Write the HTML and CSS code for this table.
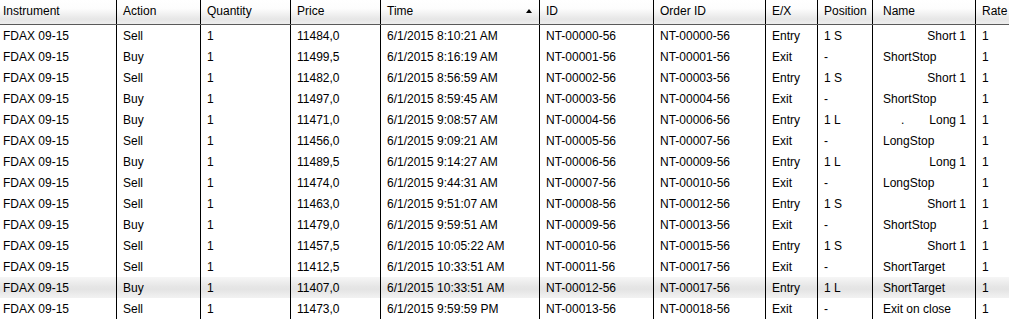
FILE: index.html
```html
<!DOCTYPE html>
<html>
<head>
<meta charset="utf-8">
<link rel="stylesheet" href="styles.css">
</head>
<body>
<div class="grid">
  <div class="row head">
    <div class="c first">Instrument</div>
    <div class="c">Action</div>
    <div class="c">Quantity</div>
    <div class="c">Price</div>
    <div class="c sorted"><span>Time</span><svg class="arrow" width="6" height="4" viewBox="0 0 6 4"><polygon points="0,4 6,4 3,0" fill="#000"/></svg></div>
    <div class="c">ID</div>
    <div class="c">Order ID</div>
    <div class="c">E/X</div>
    <div class="c">Position</div>
    <div class="c name">Name</div>
    <div class="c last">Rate</div>
  </div>
  <div class="row"><div class="c first">FDAX 09-15</div><div class="c">Sell</div><div class="c">1</div><div class="c">11484,0</div><div class="c">6/1/2015 8:10:21 AM</div><div class="c">NT-00000-56</div><div class="c">NT-00000-56</div><div class="c">Entry</div><div class="c">1 S</div><div class="c name right">Short 1</div><div class="c last">1</div></div>
  <div class="row"><div class="c first">FDAX 09-15</div><div class="c">Buy</div><div class="c">1</div><div class="c">11499,5</div><div class="c">6/1/2015 8:16:19 AM</div><div class="c">NT-00001-56</div><div class="c">NT-00001-56</div><div class="c">Exit</div><div class="c">-</div><div class="c name">ShortStop</div><div class="c last">1</div></div>
  <div class="row"><div class="c first">FDAX 09-15</div><div class="c">Sell</div><div class="c">1</div><div class="c">11482,0</div><div class="c">6/1/2015 8:56:59 AM</div><div class="c">NT-00002-56</div><div class="c">NT-00003-56</div><div class="c">Entry</div><div class="c">1 S</div><div class="c name right">Short 1</div><div class="c last">1</div></div>
  <div class="row"><div class="c first">FDAX 09-15</div><div class="c">Buy</div><div class="c">1</div><div class="c">11497,0</div><div class="c">6/1/2015 8:59:45 AM</div><div class="c">NT-00003-56</div><div class="c">NT-00004-56</div><div class="c">Exit</div><div class="c">-</div><div class="c name">ShortStop</div><div class="c last">1</div></div>
  <div class="row"><div class="c first">FDAX 09-15</div><div class="c">Buy</div><div class="c">1</div><div class="c">11471,0</div><div class="c">6/1/2015 9:08:57 AM</div><div class="c">NT-00004-56</div><div class="c">NT-00006-56</div><div class="c">Entry</div><div class="c">1 L</div><div class="c name right"><span class="dot">.</span>Long 1</div><div class="c last">1</div></div>
  <div class="row"><div class="c first">FDAX 09-15</div><div class="c">Sell</div><div class="c">1</div><div class="c">11456,0</div><div class="c">6/1/2015 9:09:21 AM</div><div class="c">NT-00005-56</div><div class="c">NT-00007-56</div><div class="c">Exit</div><div class="c">-</div><div class="c name">LongStop</div><div class="c last">1</div></div>
  <div class="row"><div class="c first">FDAX 09-15</div><div class="c">Buy</div><div class="c">1</div><div class="c">11489,5</div><div class="c">6/1/2015 9:14:27 AM</div><div class="c">NT-00006-56</div><div class="c">NT-00009-56</div><div class="c">Entry</div><div class="c">1 L</div><div class="c name right">Long 1</div><div class="c last">1</div></div>
  <div class="row"><div class="c first">FDAX 09-15</div><div class="c">Sell</div><div class="c">1</div><div class="c">11474,0</div><div class="c">6/1/2015 9:44:31 AM</div><div class="c">NT-00007-56</div><div class="c">NT-00010-56</div><div class="c">Exit</div><div class="c">-</div><div class="c name">LongStop</div><div class="c last">1</div></div>
  <div class="row"><div class="c first">FDAX 09-15</div><div class="c">Sell</div><div class="c">1</div><div class="c">11463,0</div><div class="c">6/1/2015 9:51:07 AM</div><div class="c">NT-00008-56</div><div class="c">NT-00012-56</div><div class="c">Entry</div><div class="c">1 S</div><div class="c name right">Short 1</div><div class="c last">1</div></div>
  <div class="row"><div class="c first">FDAX 09-15</div><div class="c">Buy</div><div class="c">1</div><div class="c">11479,0</div><div class="c">6/1/2015 9:59:51 AM</div><div class="c">NT-00009-56</div><div class="c">NT-00013-56</div><div class="c">Exit</div><div class="c">-</div><div class="c name">ShortStop</div><div class="c last">1</div></div>
  <div class="row"><div class="c first">FDAX 09-15</div><div class="c">Sell</div><div class="c">1</div><div class="c">11457,5</div><div class="c">6/1/2015 10:05:22 AM</div><div class="c">NT-00010-56</div><div class="c">NT-00015-56</div><div class="c">Entry</div><div class="c">1 S</div><div class="c name right">Short 1</div><div class="c last">1</div></div>
  <div class="row"><div class="c first">FDAX 09-15</div><div class="c">Sell</div><div class="c">1</div><div class="c">11412,5</div><div class="c">6/1/2015 10:33:51 AM</div><div class="c">NT-00011-56</div><div class="c">NT-00017-56</div><div class="c">Exit</div><div class="c">-</div><div class="c name">ShortTarget</div><div class="c last">1</div></div>
  <div class="row selected"><div class="c first">FDAX 09-15</div><div class="c">Buy</div><div class="c">1</div><div class="c">11407,0</div><div class="c">6/1/2015 10:33:51 AM</div><div class="c">NT-00012-56</div><div class="c">NT-00017-56</div><div class="c">Entry</div><div class="c">1 L</div><div class="c name">ShortTarget</div><div class="c last">1</div></div>
  <div class="row"><div class="c first">FDAX 09-15</div><div class="c">Sell</div><div class="c">1</div><div class="c">11473,0</div><div class="c">6/1/2015 9:59:59 PM</div><div class="c">NT-00013-56</div><div class="c">NT-00018-56</div><div class="c">Exit</div><div class="c">-</div><div class="c name">Exit on close</div><div class="c last">1</div></div>
</div>
</body>
</html>
```

FILE: styles.css
```css
html, body {
  margin: 0;
  padding: 0;
  background: #fff;
}
body {
  font-family: "Liberation Sans", Arial, sans-serif;
  font-size: 12px;
  color: #000;
  overflow: hidden;
}
.grid {
  width: 1009px;
}
.row {
  display: grid;
  grid-template-columns: 117px 84px 90px 90px 159px 114px 112px 52px 55px 103px 1fr;
  height: 21px;
}
.row.head {
  height: 25px;
  background: linear-gradient(to bottom, #ffffff 0%, #fdfdfd 35%, #e6e6e6 80%, #eeeeee 100%);
  border-bottom: 1px solid #5a5a5a;
  box-sizing: border-box;
}
.row.head .c {
  padding-bottom: 2px;
}
.row.selected {
  background: linear-gradient(to bottom, #f6f6f6 0%, #e6e6e6 45%, #e4e4e4 60%, #f2f2f2 100%);
}
.c {
  box-sizing: border-box;
  border-right: 1px solid #000;
  padding-left: 6px;
  padding-right: 6px;
  display: flex;
  align-items: center;
  white-space: nowrap;
  overflow: hidden;
  line-height: 14px;
}
.c.first {
  padding-left: 3px;
}
.c.last {
  border-right: none;
}
.c.name {
  padding-left: 10px;
  padding-right: 9px;
}
.c.right {
  justify-content: flex-end;
}
.dot {
  margin-right: 25px;
}
.c.sorted {
  justify-content: space-between;
  padding-right: 7px;
}
.arrow {
  display: block;
  margin-top: -1px;
}
```
